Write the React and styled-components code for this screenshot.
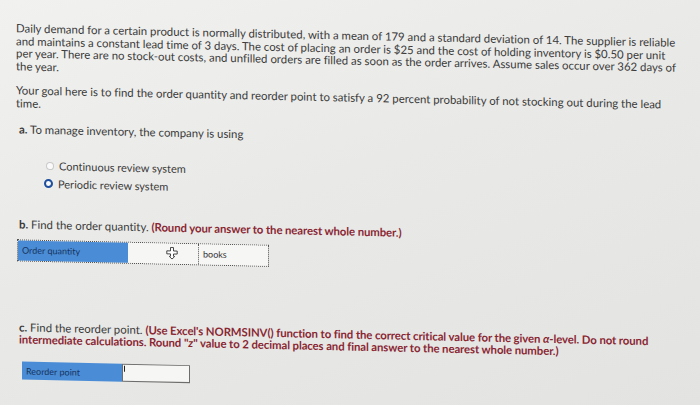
import styled, { createGlobalStyle } from "styled-components";

const GlobalStyle = createGlobalStyle`
  html, body {
    margin: 0;
    padding: 0;
  }
  body {
    width: 700px;
    height: 405px;
    overflow: hidden;
    background: linear-gradient(160deg, #f1f1ef 0%, #e9e9e7 45%, #e3e3e1 100%);
    font-family: "Lato", "Liberation Sans", sans-serif;
    font-variant-ligatures: none;
    color: #3a3a3a;
  }
`;

// the source is a photo of a screen, so the whole sheet leans a little
const Sheet = styled.div`
  padding: 22px 0 0 16px;
  transform: skewY(1.25deg);
  transform-origin: 0 0;
`;

const Para = styled.p`
  margin: 0 0 ${(p) => p.$after || 0}px ${(p) => p.$indent || 0}px;
  font-size: 11.4px;
  line-height: 12.7px;
  white-space: nowrap;
`;

const Red = styled.span`
  color: #8a2733;
  font-weight: 700;
  letter-spacing: -0.1px;
`;

const Letter = styled.b`
  font-weight: 700;
`;

const RadioList = styled.div`
  display: flex;
  flex-direction: column;
  margin: 0 0 26px 28px;
`;

const RadioRow = styled.label`
  display: flex;
  align-items: center;
  gap: 5px;
  height: 18px;
  font-size: 11px;
`;

const Dot = styled.span`
  box-sizing: border-box;
  width: ${(p) => (p.$checked ? 9 : 8)}px;
  height: ${(p) => (p.$checked ? 9 : 8)}px;
  margin-left: ${(p) => (p.$checked ? 0 : 2)}px;
  border-radius: 50%;
  background: #fafafa;
  border: ${(p) => (p.$checked ? "2.6px solid #1d4f9e" : "1px solid #c9c9c9")};
`;

const Answer = styled.div`
  display: flex;
  height: ${(p) => p.$h}px;
  width: max-content;
  margin: 0 0 ${(p) => p.$after || 0}px ${(p) => p.$indent || 0}px;
  border: ${(p) => (p.$dotted ? "1px dotted #555" : "none")};
`;

const Label = styled.div`
  display: flex;
  align-items: center;
  width: ${(p) => p.$w}px;
  padding-left: 4px;
  box-sizing: border-box;
  background: #4a8dd6;
  color: #17345f;
  font-size: 9px;
`;

const Field = styled.div`
  position: relative;
  width: ${(p) => p.$w}px;
  box-sizing: border-box;
  background: #f6f6f4;
  border: ${(p) => (p.$solid ? "1px solid #6d6d6d" : "none")};
`;

const Caret = styled.span`
  position: absolute;
  left: 1px;
  top: 1px;
  width: 1px;
  height: 6px;
  background: #222;
`;

const Pointer = styled.svg`
  position: absolute;
  left: 38px;
  top: 3px;
`;

const Unit = styled.div`
  display: flex;
  align-items: center;
  width: 70px;
  padding-left: 4px;
  box-sizing: border-box;
  background: #f6f6f4;
  border-left: 1px dotted #555;
  font-size: 9px;
  color: #333;
`;

export default function App() {
  return (
    <>
      <GlobalStyle />
      <Sheet>
        <Para $after={11}>
          Daily demand for a certain product is normally distributed, with a mean of 179 and a standard deviation of 14. The supplier is reliable
          <br />
          and maintains a constant lead time of 3 days. The cost of placing an order is $25 and the cost of holding inventory is $0.50 per unit
          <br />
          per year. There are no stock-out costs, and unfilled orders are filled as soon as the order arrives. Assume sales occur over 362 days of
          <br />
          the year.
        </Para>
        <Para $after={14}>
          Your goal here is to find the order quantity and reorder point to satisfy a 92 percent probability of not stocking out during the lead
          <br />
          time.
        </Para>
        <Para $indent={3} $after={20}>
          <Letter>a.</Letter> To manage inventory, the company is using
        </Para>
        <RadioList>
          <RadioRow>
            <Dot />
            Continuous review system
          </RadioRow>
          <RadioRow>
            <Dot $checked />
            Periodic review system
          </RadioRow>
        </RadioList>
        <Para $indent={3} $after={8}>
          <Letter>b.</Letter> Find the order quantity. <Red>(Round your answer to the nearest whole number.)</Red>
        </Para>
        <Answer $h={20} $indent={1} $dotted $after={60}>
          <Label $w={110}>Order quantity</Label>
          <Field $w={70}>
            <Pointer width="12" height="13" viewBox="0 0 12 13">
              <path
                d="M4.5 0.8h3v3.4h3.7v3h-3.7v2.3l1.2 0.2-2.7 2.6-2.7-2.6 1.2-0.2v-2.3h-3.7v-3h3.7z"
                fill="#fff"
                stroke="#333"
                strokeWidth="0.9"
                strokeLinejoin="round"
              />
            </Pointer>
          </Field>
          <Unit>books</Unit>
        </Answer>
        <Para $indent={3} $after={15}>
          <Letter>c.</Letter> Find the reorder point.{" "}
          <Red>
            (Use Excel's NORMSINV() function to find the correct critical value for the given <i>α</i>-level. Do not round
            <br />
            intermediate calculations. Round "<i>z</i>" value to 2 decimal places and final answer to the nearest whole number.)
          </Red>
        </Para>
        <Answer $h={18} $indent={6}>
          <Label $w={100}>Reorder point</Label>
          <Field $w={68} $solid>
            <Caret />
          </Field>
        </Answer>
      </Sheet>
    </>
  );
}
